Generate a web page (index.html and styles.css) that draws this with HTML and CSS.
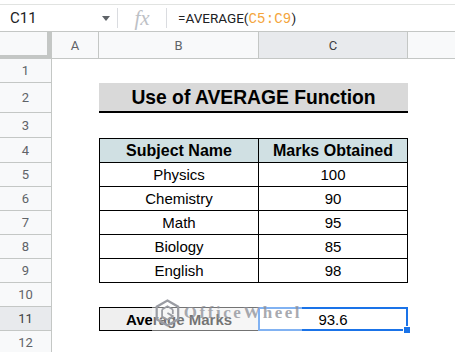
FILE: index.html
```html
<!DOCTYPE html>
<html lang="en">
<head>
  <meta charset="UTF-8">
  <title>Use of AVERAGE Function</title>
  <link rel="stylesheet" href="styles.css">
</head>
<body>
  <div class="fbar">
    <div class="namebox"><span>C11</span><span class="caret"></span></div>
    <div class="sep"></div>
    <div class="fx">fx</div>
    <div class="sep"></div>
    <div class="formula">=AVERAGE(<span class="ref">C5:C9</span>)</div>
  </div>

  <div class="sheet">
    <div class="row hrow">
      <div class="corner"></div>
      <div class="ch ca">A</div>
      <div class="ch cb">B</div>
      <div class="ch cc sel">C</div>
      <div class="ch cd"></div>
    </div>

    <div class="row"><div class="rh">1</div></div>

    <div class="row r2">
      <div class="rh">2</div>
      <div class="ca"></div>
      <div class="title">Use of AVERAGE Function</div>
    </div>

    <div class="row r3"><div class="rh">3</div></div>

    <div class="row r4">
      <div class="rh">4</div>
      <div class="ca"></div>
      <div class="t cb thead">Subject Name</div>
      <div class="t cc thead">Marks Obtained</div>
    </div>
    <div class="row">
      <div class="rh">5</div>
      <div class="ca"></div>
      <div class="t cb">Physics</div>
      <div class="t cc">100</div>
    </div>
    <div class="row">
      <div class="rh">6</div>
      <div class="ca"></div>
      <div class="t cb">Chemistry</div>
      <div class="t cc">90</div>
    </div>
    <div class="row">
      <div class="rh">7</div>
      <div class="ca"></div>
      <div class="t cb">Math</div>
      <div class="t cc">95</div>
    </div>
    <div class="row">
      <div class="rh">8</div>
      <div class="ca"></div>
      <div class="t cb">Biology</div>
      <div class="t cc">85</div>
    </div>
    <div class="row">
      <div class="rh">9</div>
      <div class="ca"></div>
      <div class="t cb">English</div>
      <div class="t cc">98</div>
    </div>

    <div class="row"><div class="rh">10</div></div>

    <div class="row">
      <div class="rh sel">11</div>
      <div class="ca"></div>
      <div class="avg-label cb">Average Marks</div>
      <div class="avg-value">93.6<span class="handle"></span></div>
    </div>

    <div class="row"><div class="rh">12</div></div>

    <div class="watermark">
      <svg width="30" height="32" viewBox="0 0 30 32">
        <path d="M15 2 L27 9 L27 23 L15 30 L3 23 L3 9 Z" fill="none" stroke="#9a9ca3" stroke-width="2.5"/>
        <path d="M9 12 L15 8.5 L21 12 M9 12 L9 20 L15 23.5 M21 12 L21 17 M15 16 L21 19.5 L15 23.5" fill="none" stroke="#9a9ca3" stroke-width="2"/>
      </svg>
      <span>OfficeWheel</span>
    </div>
  </div>
</body>
</html>
```

FILE: styles.css
```css
body { margin: 0; padding-top: 4px; background: #fff; font-family: Roboto, "Liberation Sans", sans-serif; width: 455px; height: 352px; overflow: hidden; position: relative; }

/* formula bar */
.fbar { height: 28px; box-sizing: border-box; border-top: 1px solid #e1e3e1; border-bottom: 1px solid #c4c7c5; display: flex; align-items: center; }
.namebox { width: 117px; box-sizing: border-box; padding-left: 10px; display: flex; align-items: center; font-size: 15px; color: #202124; }
.caret { margin-left: auto; margin-right: 7px; width: 0; height: 0; border-left: 4px solid transparent; border-right: 4px solid transparent; border-top: 5px solid #5f6368; }
.sep { width: 1px; height: 20px; background: #dadce0; }
.fx { width: 48px; text-align: center; font-family: "Liberation Serif", serif; font-style: italic; font-size: 21px; color: #bdc1c6; line-height: 20px; }
.formula { padding-left: 11px; font-size: 13.5px; color: #202124; }
.formula .ref { color: #f4a53c; font-family: "Liberation Mono", monospace; font-size: 14px; letter-spacing: 0.2px; }

/* grid */
.sheet { position: relative; }
.row { display: flex; height: 24px; }
.row > div { box-sizing: border-box; }
.hrow { height: 27px; }
.r2 { height: 30px; }
.r3, .r4 { height: 25px; }
.rh { width: 52px; flex: none; background: #f8f9fa; border-right: 1px solid #c4c7c5; border-bottom: 1px solid #c4c7c5; color: #5f6368; font-size: 13px; display: flex; align-items: center; justify-content: center; }
.rh.sel { background: #e8eaed; color: #3c4043; }
.corner { width: 52px; flex: none; background: #f8f9fa; box-shadow: inset -5px -4px 0 #c4c7c5; }
.ca { width: 47px; flex: none; }
.cb { width: 160px; flex: none; }
.cc { width: 149px; flex: none; }
.cd { flex: 1; }
.ch { background: #f8f9fa; border-right: 1px solid #c4c7c5; border-bottom: 1px solid #c4c7c5; color: #5f6368; font-size: 13px; display: flex; align-items: center; justify-content: center; }
.ch.ca { width: 47px; }
.ch.sel { background: #e8eaed; color: #3c4043; }
.ch.cd { border-right: none; }

/* content */
.title { width: 309px; flex: none; background: #d9d9d9; border-bottom: 2px solid #000; font-family: "Liberation Sans", Arial, sans-serif; font-weight: bold; font-size: 19.3px; color: #000; display: flex; align-items: center; justify-content: center; padding-top: 1px; }
.t { display: flex; align-items: center; justify-content: center; font-family: "Liberation Sans", Arial, sans-serif; font-size: 15px; color: #000; border-bottom: 1px solid #000; }
.t.cb { border-left: 1px solid #000; border-right: 1px solid #000; }
.t.cc { border-right: 1px solid #000; }
.thead { background: #d0e0e3; font-weight: bold; font-size: 16px; border-top: 1px solid #000; }

.avg-label { background: #efefef; border: 1px solid #000; font-family: "Liberation Sans", Arial, sans-serif; font-weight: bold; font-size: 15px; color: #000; display: flex; align-items: center; justify-content: center; }
.avg-value { width: 150px; flex: none; margin-left: -1px; border: 2px solid #1a73e8; position: relative; font-family: "Liberation Sans", Arial, sans-serif; font-size: 15px; color: #000; display: flex; align-items: center; justify-content: center; }
.handle { position: absolute; right: -5px; bottom: -5px; width: 6px; height: 6px; background: #1a73e8; border: 1px solid #fff; }

/* watermark over B11:C11 */
.watermark { position: absolute; left: 152px; top: 262px; width: 150px; height: 37px; background: rgba(255,255,255,0.45); display: flex; align-items: center; gap: 3px; padding-left: 2px; box-sizing: border-box; }
.watermark span { font-family: "Liberation Serif", serif; font-weight: bold; font-size: 17px; letter-spacing: 2.5px; color: rgba(140,142,150,0.75); }
```
